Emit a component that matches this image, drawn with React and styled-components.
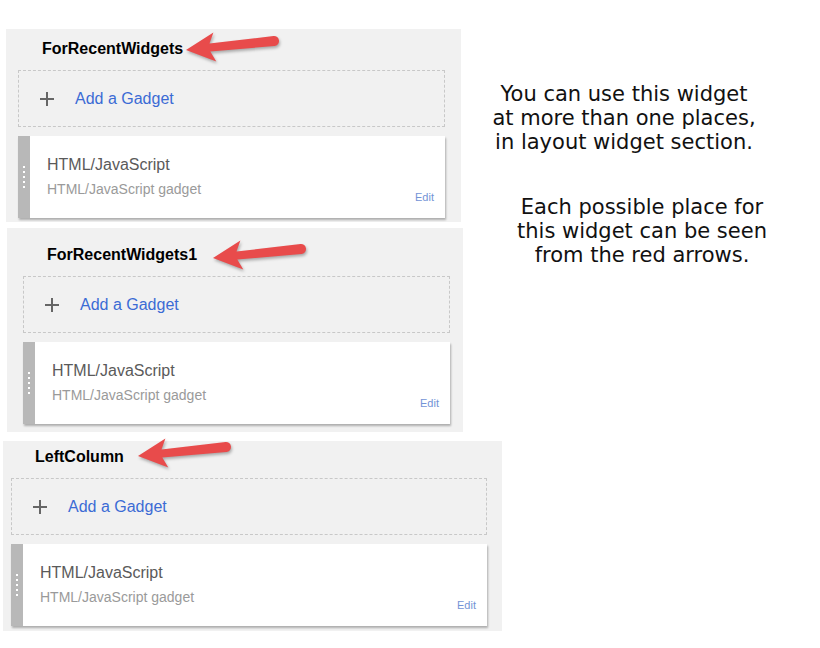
import React from 'react'
import styled, { createGlobalStyle } from 'styled-components'

const GlobalStyle = createGlobalStyle`
  body {
    margin: 0;
    background: #fff;
    font-family: "Liberation Sans", Arial, sans-serif;
  }
`

const Page = styled.div`
  width: 820px;
  height: 648px;
  overflow: hidden;
`
const Top = styled.div`
  display: flex;
  align-items: flex-start;
`
const Stack = styled.div`
  flex: none;
  width: 463px;
  padding-top: 29px;
  display: flex;
  flex-direction: column;
`
const Panel = styled.section`
  box-sizing: border-box;
  background: #f1f1f1;
  margin-left: ${p => p.$ml}px;
  margin-top: ${p => p.$mt || 0}px;
  width: ${p => p.$w}px;
  padding: ${p => p.$pt}px ${p => p.$pr}px ${p => p.$pb}px ${p => p.$pl}px;
`
const Header = styled.div`
  display: flex;
  align-items: center;
  height: 18px;
  margin: 0 0 12px 24px;
`
const Title = styled.h3`
  margin: 0;
  font-size: 16px;
  line-height: 18px;
  font-weight: bold;
  color: #000;
`
const ArrowSvg = styled.svg`
  flex: none;
  overflow: visible;
  margin-left: ${p => p.$gap}px;
  transform: translateY(${p => p.$dy}px);
  filter: drop-shadow(1px 2px 1.5px rgba(0, 0, 0, 0.3));
`
const AddBox = styled.div`
  box-sizing: border-box;
  height: 57px;
  border: 1px dashed #c8c8c8;
  display: flex;
  align-items: center;
  padding-left: 21px;
`
const AddLabel = styled.span`
  margin-left: 21px;
  font-size: 16px;
  color: #3b6bd5;
`
const Card = styled.div`
  margin-top: 9px;
  height: 82px;
  display: flex;
  background: #fff;
  box-shadow: 1px 2px 2px rgba(0, 0, 0, 0.28);
`
const Handle = styled.div`
  flex: none;
  width: 12px;
  background: #b8b8b8;
  display: flex;
  flex-direction: column;
  align-items: center;
  justify-content: center;
  gap: 3px;
`
const Dot = styled.span`
  width: 2px;
  height: 2px;
  background: #fff;
`
const CardBody = styled.div`
  flex: 1;
  display: flex;
  padding: 20px 11px 14px 17px;
`
const Info = styled.div`
  flex: 1;
`
const Name = styled.div`
  font-size: 16px;
  line-height: 18px;
  color: #5a5a5a;
`
const Desc = styled.div`
  margin-top: 7px;
  font-size: 14px;
  line-height: 16px;
  color: #9a9a9a;
`
const Edit = styled.a`
  align-self: flex-end;
  font-size: 11px;
  line-height: 13px;
  color: #7393d6;
  cursor: pointer;
`
const Notes = styled.div`
  flex: 1;
  padding-top: 82px;
  font-family: "DejaVu Sans", Verdana, sans-serif;
  font-size: 21px;
  line-height: 24px;
  color: #111;
`
const Note = styled.p`
  margin: ${p => p.$mt}px 0 0 ${p => p.$ml}px;
  width: ${p => p.$w}px;
  text-align: center;
  white-space: nowrap;
`

function Arrow({ gap, dy }) {
  return (
    <ArrowSvg width="92" height="18" viewBox="0 0 92 18" $gap={gap} $dy={dy}>
      <path
        d="M2 11 L29.4 -6.4 L25.5 4.6 L89.5 -3 A5 5 0 0 1 90.5 7 L26.3 12.5 L32.3 22.5 Z"
        fill="#e84b4b"
      />
    </ArrowSvg>
  )
}

function Plus() {
  return (
    <svg width="14" height="14" viewBox="0 0 14 14">
      <path d="M7 0 V14 M0 7 H14" stroke="#666" strokeWidth="2" />
    </svg>
  )
}

function Section({ title, arrowGap, arrowDy, ...box }) {
  return (
    <Panel {...box}>
      <Header>
        <Title>{title}</Title>
        <Arrow gap={arrowGap} dy={arrowDy} />
      </Header>
      <AddBox>
        <Plus />
        <AddLabel>Add a Gadget</AddLabel>
      </AddBox>
      <Card>
        <Handle>
          <Dot /><Dot /><Dot /><Dot /><Dot />
        </Handle>
        <CardBody>
          <Info>
            <Name>HTML/JavaScript</Name>
            <Desc>HTML/JavaScript gadget</Desc>
          </Info>
          <Edit>Edit</Edit>
        </CardBody>
      </Card>
    </Panel>
  )
}

export default function App() {
  return (
    <Page>
      <GlobalStyle />
      <Top>
        <Stack>
          <Section title="ForRecentWidgets" arrowGap={1} arrowDy={-1}
            $ml={6} $w={455} $pt={11} $pr={16} $pb={4} $pl={12} />
          <Section title="ForRecentWidgets1" arrowGap={14} arrowDy={1}
            $ml={7} $mt={6} $w={456} $pt={18} $pr={13} $pb={8} $pl={16} />
        </Stack>
        <Notes>
          <Note $mt={0} $ml={0} $w={322}>
            You can use this widget<br />
            at more than one places,<br />
            in layout widget section.
          </Note>
          <Note $mt={41} $ml={36} $w={286}>
            Each possible place for<br />
            this widget can be seen<br />
            from the red arrows.
          </Note>
        </Notes>
      </Top>
      <Section title="LeftColumn" arrowGap={12} arrowDy={-3}
        $ml={3} $mt={9} $w={499} $pt={7} $pr={15} $pb={5} $pl={8} />
    </Page>
  )
}
